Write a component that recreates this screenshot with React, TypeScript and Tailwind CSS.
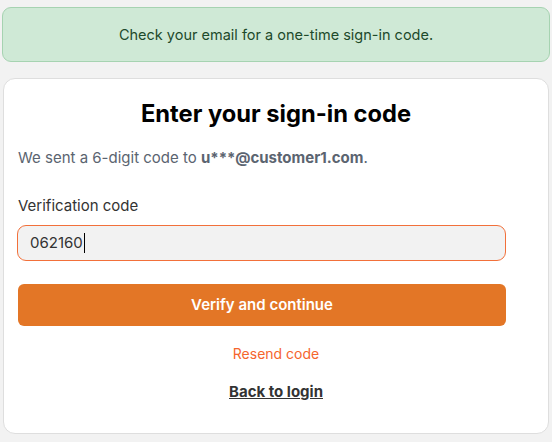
export default function App() {
  return (
    <div className="w-[552px] h-[442px] bg-[#f2f2f2] overflow-hidden pt-[7px] px-[2px]" style={{ fontFamily: 'Inter, "Noto Sans", sans-serif' }}>
      <div className="h-[55px] rounded-[9px] border border-[#a6d3b1] bg-[#cfe9d6] flex items-center justify-center text-[14.5px] text-[#1d4a2b]">
        Check your email for a one-time sign-in code.
      </div>
      <div className="mt-[16px] mx-[1px] h-[356px] rounded-[12px] border border-[#dedede] bg-white pl-[14px] pt-[20px]">
        <h1 className="text-[23.7px] font-bold text-black text-center leading-[30px] pr-[14px]">Enter your sign-in code</h1>
        <p className="mt-[19px] text-[15px] text-[#5b6470] leading-[20px]">
          We sent a 6-digit code to <strong className="font-bold">u***@customer1.com</strong>.
        </p>
        <div className="mt-[28px] text-[15px] text-[#333] leading-[20px]">Verification code</div>
        <div className="mt-[9px] -ml-px w-[489px] h-[36px] rounded-[9px] border border-[#f2703a] bg-[#f2f2f2] flex items-center px-[12px] text-[15px] text-[#333]">
          <span>062160</span>
          <span className="w-px h-[20px] bg-black ml-[1px]" />
        </div>
        <div className="mt-[23px] w-[488px] h-[42px] rounded-[6px] bg-[#e37626] flex items-center justify-center text-white text-[15px] font-semibold">
          Verify and continue
        </div>
        <div className="mt-[18px] text-center text-[14px] text-[#f5652d] pr-[14px] leading-[20px]">Resend code</div>
        <div className="mt-[17px] text-center pr-[14px] leading-[20px]">
          <a className="text-[15px] font-bold text-[#333] underline">Back to login</a>
        </div>
      </div>
    </div>
  );
}
